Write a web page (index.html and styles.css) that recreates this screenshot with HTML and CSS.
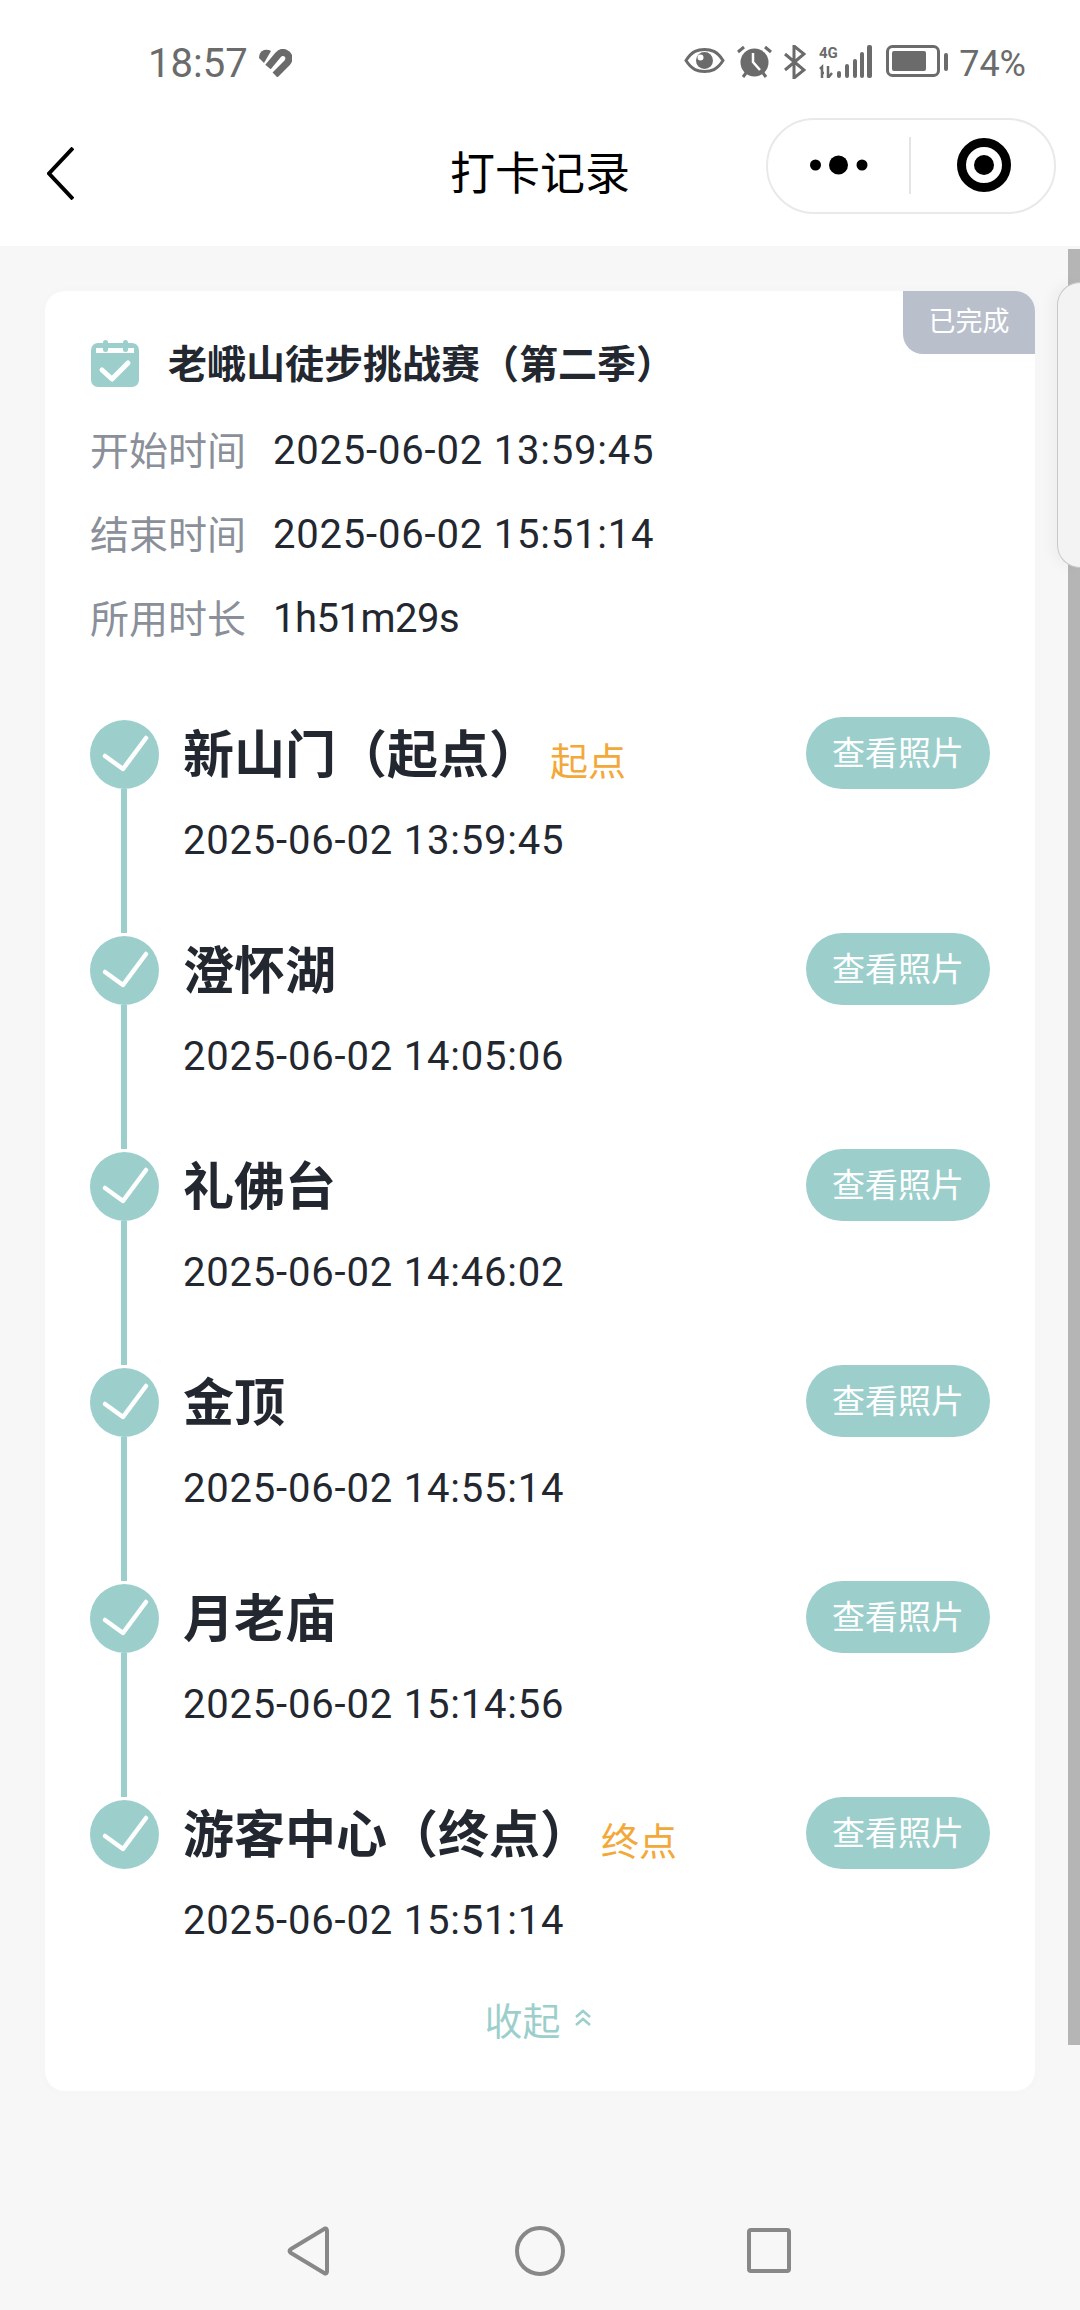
FILE: index.html
```html
<!DOCTYPE html>
<html>
<head>
    <title>打卡记录</title>
    <link rel="stylesheet" href="styles.css">
</head>
<body>
    <!-- Status bar -->
    <div class="status-bar">
        <div class="status-left">
            <span class="clock">18:57</span>
            <svg class="icon-heart" viewBox="0 0 33 28"><path d="M0 9 Q0 3 5 1 Q9 0 12 2 L5 14 Z" fill="#6b6b6b"/><path d="M9 18 L19 6 Q23 1.500 28 5 Q32 9 28 14 L16 26" stroke="#6b6b6b" stroke-width="7" fill="none"/></svg>
        </div>
        <div class="status-right">
            <svg class="icon-eye" viewBox="0 0 41 25"><path d="M2 12.500 C8 3 14 1.500 20.500 1.500 C27 1.500 33 3 39 12.500 C33 22 27 23.500 20.500 23.500 C14 23.500 8 22 2 12.500 Z" fill="none" stroke="#6b6b6b" stroke-width="3"/><circle cx="20.500" cy="12.500" r="8.500" fill="#6b6b6b"/><circle cx="16.500" cy="9.500" r="3" fill="#fff"/></svg>
            <svg class="icon-alarm" viewBox="0 0 35 33"><circle cx="17.500" cy="17.500" r="14" fill="#6b6b6b"/><path d="M1 7 L7 2 M34 7 L28 2 M6 32 L9 28 M29 32 L26 28" stroke="#6b6b6b" stroke-width="3" fill="none"/><path d="M16 8 L16 17 L23 25" stroke="#fff" stroke-width="2.500" fill="none"/></svg>
            <svg class="icon-bt" viewBox="0 0 22 34"><path d="M1 9 L20 25 L10 33 L10 1 L20 9 L1 25" fill="none" stroke="#6b6b6b" stroke-width="3"/></svg>
            <svg class="icon-signal" viewBox="0 0 53 33">
                <text x="0" y="13" class="signal-text">4G</text>
                <path d="M3 33 V22 L1 24 M9 21 V33 M9 33 L13 28 M5 28 H3" stroke="#6b6b6b" stroke-width="2.500" fill="none"/>
                <rect x="18" y="26" width="4" height="7" rx="2" fill="#6b6b6b"/>
                <rect x="26" y="19" width="4" height="14" rx="2" fill="#6b6b6b"/>
                <rect x="34" y="14" width="4" height="19" rx="2" fill="#6b6b6b"/>
                <rect x="41" y="7" width="4" height="26" rx="2" fill="#6b6b6b"/>
                <rect x="48" y="0" width="5" height="33" rx="2" fill="#6b6b6b"/>
            </svg>
            <svg class="icon-battery" viewBox="0 0 62 32"><rect x="1.500" y="1.500" width="51" height="29" rx="5" fill="none" stroke="#6b6b6b" stroke-width="3"/><rect x="6" y="6" width="34" height="20" rx="2" fill="#6b6b6b"/><rect x="58" y="8" width="4" height="18" rx="2" fill="#6b6b6b"/></svg>
            <span class="battery-text">74%</span>
        </div>
    </div>

    <!-- Navigation -->
    <div class="nav-bar">
        <svg class="nav-back" viewBox="0 0 27 53"><path d="M26 1 L2 26.500 L26 52" fill="none" stroke="#000" stroke-width="4"/></svg>
        <span class="nav-title">打卡记录</span>
        <div class="capsule">
            <div class="capsule-more">
                <svg class="icon-more" viewBox="0 0 58 20"><circle cx="5.500" cy="10" r="5.500"/><circle cx="28.500" cy="10" r="9.500"/><circle cx="52" cy="10" r="5.500"/></svg>
            </div>
            <div class="capsule-line"></div>
            <div class="capsule-target">
                <svg class="icon-target" viewBox="0 0 54 54"><circle cx="27" cy="27" r="22.500" fill="none" stroke="#000" stroke-width="9"/><circle cx="27" cy="27" r="10"/></svg>
            </div>
        </div>
    </div>

    <!-- Page content -->
    <div class="content">
        <div class="card">
            <div class="state-tag">已完成</div>

            <div class="card-title">
                <svg class="icon-calendar" viewBox="0 0 48 47"><rect x="0" y="3" width="48" height="44" rx="7" fill="#9ccfcc"/><rect x="5" y="8" width="38" height="5" fill="#fff"/><rect x="12" y="0" width="5" height="12" rx="2.500" fill="#9ccfcc"/><rect x="32" y="0" width="5" height="12" rx="2.500" fill="#9ccfcc"/><path d="M11 30 L21 39 L37 23" fill="none" stroke="#fff" stroke-width="5" stroke-linecap="round" stroke-linejoin="round"/></svg>
                <span>老峨山徒步挑战赛（第二季）</span>
            </div>

            <div class="info-row"><span class="info-label">开始时间</span><span class="info-value date-text">2025-06-02 13:59:45</span></div>
            <div class="info-row"><span class="info-label">结束时间</span><span class="info-value date-text">2025-06-02 15:51:14</span></div>
            <div class="info-row"><span class="info-label">所用时长</span><span class="info-value duration-text">1h51m29s</span></div>

            <div class="timeline">
                <div class="point">
                    <div class="marker">
                        <svg class="icon-check" viewBox="0 0 69 69"><circle cx="34.500" cy="34.500" r="34.500" fill="#9ccfcc"/><path d="M15 36 L33 49 L56 18" fill="none" stroke="#fff" stroke-width="4.500" stroke-linecap="round" stroke-linejoin="round"/></svg>
                        <div class="marker-line"></div>
                    </div>
                    <div class="point-body">
                        <div class="point-name">新山门（起点）<span class="point-tag">起点</span></div>
                        <div class="point-time date-text">2025-06-02 13:59:45</div>
                    </div>
                    <div class="photo-btn">查看照片</div>
                </div>

                <div class="point">
                    <div class="marker">
                        <svg class="icon-check" viewBox="0 0 69 69"><circle cx="34.500" cy="34.500" r="34.500" fill="#9ccfcc"/><path d="M15 36 L33 49 L56 18" fill="none" stroke="#fff" stroke-width="4.500" stroke-linecap="round" stroke-linejoin="round"/></svg>
                        <div class="marker-line"></div>
                    </div>
                    <div class="point-body">
                        <div class="point-name">澄怀湖</div>
                        <div class="point-time date-text">2025-06-02 14:05:06</div>
                    </div>
                    <div class="photo-btn">查看照片</div>
                </div>

                <div class="point">
                    <div class="marker">
                        <svg class="icon-check" viewBox="0 0 69 69"><circle cx="34.500" cy="34.500" r="34.500" fill="#9ccfcc"/><path d="M15 36 L33 49 L56 18" fill="none" stroke="#fff" stroke-width="4.500" stroke-linecap="round" stroke-linejoin="round"/></svg>
                        <div class="marker-line"></div>
                    </div>
                    <div class="point-body">
                        <div class="point-name">礼佛台</div>
                        <div class="point-time date-text">2025-06-02 14:46:02</div>
                    </div>
                    <div class="photo-btn">查看照片</div>
                </div>

                <div class="point">
                    <div class="marker">
                        <svg class="icon-check" viewBox="0 0 69 69"><circle cx="34.500" cy="34.500" r="34.500" fill="#9ccfcc"/><path d="M15 36 L33 49 L56 18" fill="none" stroke="#fff" stroke-width="4.500" stroke-linecap="round" stroke-linejoin="round"/></svg>
                        <div class="marker-line"></div>
                    </div>
                    <div class="point-body">
                        <div class="point-name">金顶</div>
                        <div class="point-time date-text">2025-06-02 14:55:14</div>
                    </div>
                    <div class="photo-btn">查看照片</div>
                </div>

                <div class="point">
                    <div class="marker">
                        <svg class="icon-check" viewBox="0 0 69 69"><circle cx="34.500" cy="34.500" r="34.500" fill="#9ccfcc"/><path d="M15 36 L33 49 L56 18" fill="none" stroke="#fff" stroke-width="4.500" stroke-linecap="round" stroke-linejoin="round"/></svg>
                        <div class="marker-line"></div>
                    </div>
                    <div class="point-body">
                        <div class="point-name">月老庙</div>
                        <div class="point-time date-text">2025-06-02 15:14:56</div>
                    </div>
                    <div class="photo-btn">查看照片</div>
                </div>

                <div class="point point-last">
                    <div class="marker">
                        <svg class="icon-check" viewBox="0 0 69 69"><circle cx="34.500" cy="34.500" r="34.500" fill="#9ccfcc"/><path d="M15 36 L33 49 L56 18" fill="none" stroke="#fff" stroke-width="4.500" stroke-linecap="round" stroke-linejoin="round"/></svg>
                    </div>
                    <div class="point-body">
                        <div class="point-name">游客中心（终点）<span class="point-tag">终点</span></div>
                        <div class="point-time date-text">2025-06-02 15:51:14</div>
                    </div>
                    <div class="photo-btn">查看照片</div>
                </div>
            </div>

            <div class="collapse">
                <span>收起</span>
                <svg class="icon-up" viewBox="0 0 20 18"><path d="M3 8 L10 2 L17 8 M3 16 L10 10 L17 16" fill="none" stroke="#9ccfcc" stroke-width="2.500"/></svg>
            </div>
        </div>

        <!-- Scroll bar and floating side panel -->
        <div class="scroll-thumb"></div>
        <div class="side-panel"></div>
    </div>

    <!-- System buttons -->
    <div class="system-bar">
        <svg class="sys-back" viewBox="0 0 42 50"><path d="M38 2.500 Q40 2 40 5 L40 45 Q40 48 38 47.500 L4 27 Q1 25 4 23 Z" fill="none" stroke="#888" stroke-width="4" stroke-linejoin="round"/></svg>
        <svg class="sys-home" viewBox="0 0 50 50"><circle cx="25" cy="25" r="23" fill="none" stroke="#888" stroke-width="4"/></svg>
        <svg class="sys-square" viewBox="0 0 44 45"><rect x="2" y="2" width="40" height="41" rx="2" fill="none" stroke="#888" stroke-width="4"/></svg>
    </div>
</body>
</html>
```

FILE: styles.css
```css
* {
    box-sizing: border-box;
}

body {
    margin: 0;
    width: 1080px;
    height: 2310px;
    overflow: hidden;
    display: flex;
    flex-direction: column;
    background-color: #f7f7f7;
    font-family: Roboto, "Noto Sans CJK SC", sans-serif;
    color: #23272f;
}

/* Status bar */
.status-bar {
    height: 118px;
    flex: none;
    display: flex;
    justify-content: space-between;
    background-color: #ffffff;
    padding: 45px 54px 0 148px;
    color: #6b6b6b;
}

.status-left,
.status-right {
    display: flex;
    align-items: flex-start;
}

.clock {
    font-size: 40px;
    line-height: 38px;
    width: 111px;
}

.icon-heart { width: 33px; height: 28px; margin: 4px 0 0 0; }
.icon-eye { width: 41px; height: 25px; margin-top: 3px; }
.icon-alarm { width: 35px; height: 33px; margin-left: 12px; }
.icon-bt { width: 22px; height: 34px; margin-left: 12px; }
.icon-signal { width: 53px; height: 33px; margin-left: 13px; }
.icon-battery { width: 62px; height: 32px; margin-left: 14px; }

.signal-text {
    font-size: 15px;
    font-weight: 700;
    fill: #6b6b6b;
}

.battery-text {
    font-size: 36px;
    line-height: 38px;
    margin-left: 11px;
}

/* Navigation */
.nav-bar {
    height: 128px;
    flex: none;
    display: flex;
    align-items: flex-start;
    position: relative;
    background-color: #ffffff;
}

.nav-back {
    width: 27px;
    height: 53px;
    margin: 29px 0 0 47px;
}

.nav-title {
    width: 180px;
    margin: 27px 0 0 376px;
    font-size: 45px;
    line-height: 60px;
    color: #000000;
    white-space: nowrap;
}

.capsule {
    width: 290px;
    height: 96px;
    margin-left: 136px;
    border: 2px solid #e9e9e9;
    border-radius: 48px;
    display: flex;
    align-items: center;
}

.capsule-more {
    width: 141px;
    display: flex;
    justify-content: center;
}

.capsule-line {
    width: 2px;
    height: 57px;
    background-color: #e4e4e4;
    margin-top: -2px;
}

.capsule-target {
    flex: 1;
    display: flex;
    justify-content: center;
    padding-left: 3px;
}

.icon-more { width: 58px; height: 20px; margin-top: -2px; }
.icon-target { width: 54px; height: 54px; margin-top: -2px; }

/* Page content */
.content {
    flex: 1;
    position: relative;
    padding: 45px 45px 0;
}

.card {
    width: 990px;
    position: relative;
    background-color: #ffffff;
    border-radius: 20px;
    padding: 45px 45px 48px;
    box-shadow: 0 0 16px rgba(0, 0, 0, 0.015);
}

.state-tag {
    position: absolute;
    top: 0;
    right: 0;
    width: 132px;
    height: 63px;
    background-color: #b9c0cb;
    border-radius: 0 20px 0 20px;
    color: #ffffff;
    font-size: 27px;
    line-height: 63px;
    text-align: center;
}

.card-title {
    display: flex;
    align-items: center;
    height: 50px;
    font-size: 39px;
    font-weight: 700;
    margin-bottom: 22px;
}

.icon-calendar {
    width: 48px;
    height: 47px;
    margin: 4px 29px 0 1px;
}

.info-row {
    display: flex;
    align-items: center;
    height: 84px;
    font-size: 40px;
}

.info-label {
    width: 183px;
    font-size: 39px;
    color: #8a8f99;
    padding-bottom: 4px;
}

.date-text {
    letter-spacing: 0.8px;
}

.duration-text {
    letter-spacing: -0.5px;
}

.timeline {
    margin-top: 57px;
}

.point {
    display: flex;
    align-items: flex-start;
    height: 216px;
}

.point-last {
    height: auto;
}

.marker {
    width: 69px;
    height: 100%;
    display: flex;
    flex-direction: column;
    align-items: center;
    padding-top: 3px;
    margin-right: 24px;
    flex: none;
}

.icon-check {
    width: 69px;
    height: 69px;
    flex: none;
}

.marker-line {
    width: 6px;
    flex: 1;
    background-color: #9ccfcc;
    margin-left: -2px;
}

.point-body {
    flex: 1;
    padding-top: 9px;
}

.point-name {
    font-size: 51px;
    font-weight: 700;
    line-height: 60px;
    height: 60px;
    white-space: nowrap;
}

.point-tag {
    font-size: 38px;
    font-weight: 400;
    line-height: 1;
    color: #f3a83a;
    margin-left: 10px;
    vertical-align: -2px;
}

.point-time {
    font-size: 40px;
    line-height: 50px;
    margin-top: 30px;
}

.photo-btn {
    width: 184px;
    height: 72px;
    flex: none;
    border-radius: 36px;
    background-color: #9ccfcc;
    color: #ffffff;
    font-size: 33px;
    line-height: 74px;
    text-align: center;
}

.collapse {
    display: flex;
    align-items: center;
    justify-content: center;
    gap: 12px;
    margin-top: 47px;
    height: 50px;
    color: #9ccfcc;
    font-size: 38px;
}

.collapse span {
    margin-left: -3px;
}

.icon-up {
    width: 20px;
    height: 18px;
}

.scroll-thumb {
    position: absolute;
    top: 3px;
    right: 0;
    width: 12px;
    height: 1796px;
    background-color: #b5b5b5;
}

.side-panel {
    position: absolute;
    top: 36px;
    right: 0;
    width: 23px;
    height: 286px;
    background-color: #f3f3f3;
    border: 1px solid #c8c8c8;
    border-right: none;
    border-radius: 40px 0 0 40px;
    box-shadow: -6px 0 14px rgba(0, 0, 0, 0.04);
}

/* System buttons */
.system-bar {
    position: absolute;
    top: 2226px;
    left: 0;
    display: flex;
    align-items: flex-start;
    padding-left: 287px;
}

.sys-back { width: 42px; height: 50px; }
.sys-home { width: 50px; height: 50px; margin-left: 186px; }
.sys-square { width: 44px; height: 45px; margin-left: 182px; margin-top: 2px; }
```
